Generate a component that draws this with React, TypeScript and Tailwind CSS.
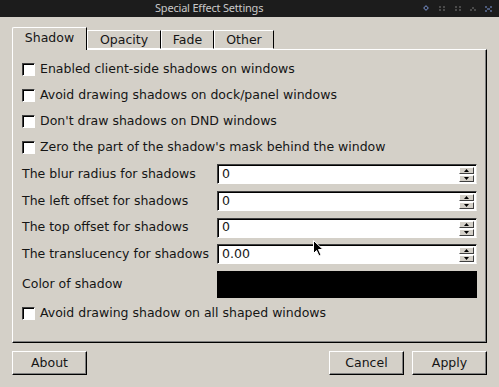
import React from "react";

const FONT = { fontFamily: '"DejaVu Sans", Verdana, sans-serif' };

function Checkbox({ label }: { label: string }) {
  return (
    <div className="flex items-center h-full gap-[5px]">
      <span className="block w-[13px] h-[13px] bg-white border-t border-l border-t-[#404040] border-l-[#404040] border-b border-r border-b-white border-r-white shadow-[inset_1px_1px_0_#000]" />
      <span>{label}</span>
    </div>
  );
}

function SpinInput({ value }: { value: string }) {
  return (
    <div className="relative w-[260px] h-[20px] bg-white border border-t-[#404040] border-l-[#404040] border-b-white border-r-[#e8e6e0] shadow-[inset_1px_1px_0_#000] flex items-center pl-[4px]">
      <span>{value}</span>
      <div className="absolute right-[2px] top-[2px] flex flex-col gap-[1px]">
        {["up", "down"].map((d) => (
          <div key={d} className="w-[15px] h-[7px] bg-[#d4d0c8] border-t border-l border-t-white border-l-white border-b border-r border-b-[#404040] border-r-[#404040] flex items-center justify-center">
            <svg width="5" height="3" viewBox="0 0 5 3">
              {d === "up" ? <path d="M2.5 0 L5 3 L0 3 Z" fill="#000" /> : <path d="M0 0 L5 0 L2.5 3 Z" fill="#000" />}
            </svg>
          </div>
        ))}
      </div>
    </div>
  );
}

function Button({ label, w }: { label: string; w: string }) {
  return (
    <div className={`${w} h-[24px] flex items-center justify-center bg-[#d4d0c8] border border-t-white border-l-white border-b-[#000] border-r-[#000] shadow-[inset_-1px_-1px_0_#808080]`}>
      {label}
    </div>
  );
}

const TABS = [
  { name: "Shadow", w: "w-[75px]", active: true },
  { name: "Opacity", w: "w-[74px]", active: false },
  { name: "Fade", w: "w-[53px]", active: false },
  { name: "Other", w: "w-[60px]", active: false },
];

const SPINS = [
  ["The blur radius for shadows", "0"],
  ["The left offset for shadows", "0"],
  ["The top offset for shadows", "0"],
  ["The translucency for shadows", "0.00"],
];

export default function App() {
  return (
    <div className="relative w-[499px] h-[387px] bg-[#d4d0c8] text-[#151515] text-[12.5px] overflow-hidden" style={FONT}>
      {/* title bar */}
      <div className="relative h-[17px] bg-[#1c1c1c] flex items-center pl-[155px]">
        <span className="text-[#c9c9c9] text-[11px] tracking-[-0.2px]" style={{ fontFamily: '"Noto Sans", sans-serif' }}>Special Effect Settings</span>
        <div className="absolute right-0 top-0 h-full flex items-center">
          <svg width="80" height="17" viewBox="0 0 80 17">
            <path d="M7 5 L10 8 L7 11 L4 8 Z" fill="#5d6f9a" />
            <rect x="6" y="7" width="2" height="2" fill="#1c1c1c" />
            <g fill="#4a4a4a">
              <rect x="20" y="6" width="2" height="2" />
              <rect x="24" y="6" width="2" height="2" />
              <rect x="24" y="9" width="2" height="2" />
              <rect x="20" y="9" width="2" height="2" />
              <rect x="36" y="6" width="2" height="2" />
              <rect x="40" y="6" width="2" height="2" />
              <rect x="36" y="9" width="2" height="2" />
              <rect x="40" y="9" width="2" height="2" />
              <rect x="53" y="7" width="2" height="2" />
              <rect x="51" y="9" width="2" height="2" />
              <rect x="55" y="9" width="2" height="2" />
            </g>
            <g fill="#4c5a7a">
              <rect x="66" y="6" width="2" height="2" />
              <rect x="71" y="6" width="2" height="2" />
              <rect x="68" y="8" width="3" height="2" />
              <rect x="66" y="10" width="2" height="2" />
              <rect x="71" y="10" width="2" height="2" />
            </g>
          </svg>
        </div>
      </div>

      {/* tabs */}
      <div className="flex items-end h-[32px] pl-[12px] relative z-10">
        {TABS.map((t) =>
          t.active ? (
            <div key={t.name} className={`${t.w} h-[23px] -mb-[1px] bg-[#d4d0c8] border-t border-l border-t-white border-l-white border-r border-r-[#000] rounded-tl-[2px] flex items-center justify-center pb-[2px]`}>
              {t.name}
            </div>
          ) : (
            <div key={t.name} className={`${t.w} h-[19px] bg-[#d4d0c8] border-t border-l border-t-white border-l-white border-r border-r-[#000] border-b border-b-white flex items-center justify-center pt-[1px]`}>
              {t.name}
            </div>
          )
        )}
      </div>

      {/* panel */}
      <div className="mx-[12px] h-[294px] border border-t-white border-l-white border-r-[#000] border-b-[#000] shadow-[inset_-1px_-1px_0_#808080] pl-[9px] pt-[6px]">
        {[
          "Enabled client-side shadows on windows",
          "Avoid drawing shadows on dock/panel windows",
          "Don't draw shadows on DND windows",
          "Zero the part of the shadow's mask behind the window",
        ].map((l) => (
          <div key={l} className="h-[26px]">
            <Checkbox label={l} />
          </div>
        ))}
        {SPINS.map(([l, v], i) => (
          <div key={l} className={`flex items-center ${i === 0 ? "h-[28px]" : i === 2 ? "h-[27px]" : "h-[26px]"}`}>
            <span className="w-[195px]">{l}</span>
            <SpinInput value={v} />
          </div>
        ))}
        <div className="flex items-center h-[35px]">
          <span className="w-[195px]">Color of shadow</span>
          <div className="w-[260px] h-[27px] bg-black" />
        </div>
        <div className="h-[23px]">
          <Checkbox label="Avoid drawing shadow on all shaped windows" />
        </div>
      </div>

      {/* buttons */}
      <div className="flex items-center mt-[8px] px-[12px]">
        <Button label="About" w="w-[75px]" />
        <div className="flex-1" />
        <Button label="Cancel" w="w-[75px]" />
        <div className="w-[8px]" />
        <Button label="Apply" w="w-[75px]" />
      </div>

      {/* mouse pointer */}
      <svg className="absolute left-[313px] top-[240px]" width="12" height="18" viewBox="0 0 12 18">
        <path d="M0.5 0.5 L0.5 13.5 L3.5 10.5 L6 16 L8 15 L5.5 9.5 L10 9.5 Z" fill="#000" stroke="#fff" strokeWidth="1" />
      </svg>
    </div>
  );
}
